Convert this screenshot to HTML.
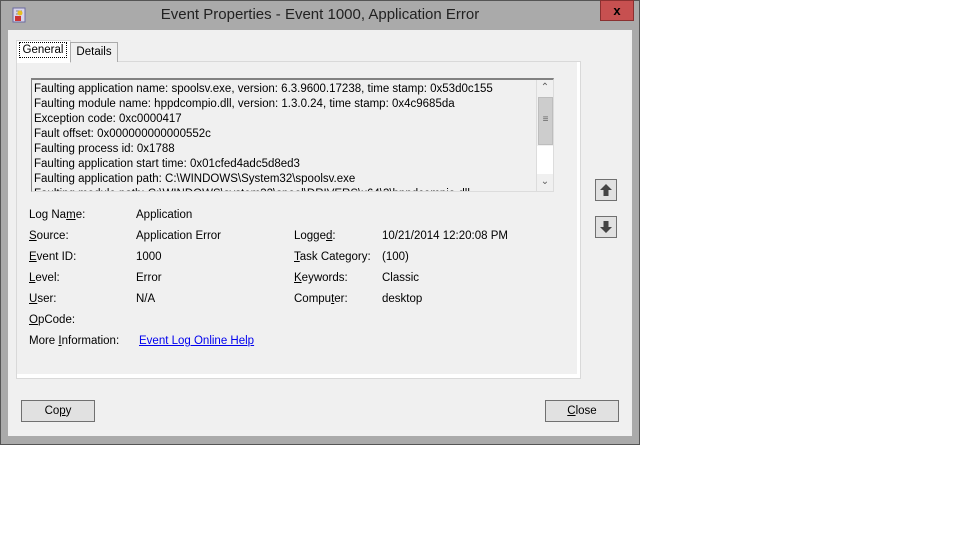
<!DOCTYPE html>
<html><head><style>
body{margin:0;width:960px;height:540px;background:#fff;position:relative;font-family:"Liberation Sans",sans-serif;font-size:11.5px;color:#000;overflow:hidden}
.a{position:absolute}
.win{left:0;top:0;width:638px;height:443px;background:#aaaaaa;border:1px solid #555}
.client{left:8px;top:30px;width:624px;height:406px;background:#f0f0f0}
.t{white-space:nowrap}
u{text-decoration:underline}
.btn{background:#e1e1e1;border:1px solid #707070;text-align:center;line-height:20px;height:20px}
.arr{width:20px;height:20px;background:#e1e1e1;border:1px solid #707070}
</style></head><body>
<div class="a win"></div>
<div class="a t" style="left:0;top:6px;width:640px;text-align:center;font-size:15px;color:#222">Event Properties - Event 1000, Application Error</div>
<svg class="a" style="left:12px;top:7px" width="14" height="16"><rect x="1" y="1" width="12" height="14" fill="#d9d4ea" stroke="#6a6aa0"/><path d="M4 4h6M4 7h6" stroke="#888"/><circle cx="8" cy="6" r="2.5" fill="#e8c020"/><rect x="3" y="9" width="6" height="5" fill="#c33"/></svg>
<div class="a" style="left:600px;top:0;width:34px;height:21px;background:#c75050;border:1px solid #8a3030;box-sizing:border-box;color:#000;font-weight:bold;text-align:center;line-height:19px;font-size:13px">x</div>
<div class="a client"></div>
<div class="a" style="left:16px;top:61px;width:563px;height:316px;border:1px solid #d9d9d9;background:#fff"></div>
<div class="a" style="left:17px;top:62px;width:560px;height:312px;background:#f0f0f0"></div>
<div class="a" style="left:16px;top:40px;width:53px;height:22px;background:#fff;border:1px solid #d9d9d9;border-bottom:none"></div>
<div class="a t" style="left:19px;top:42px;width:48px;height:16px;border:1px dotted #000;box-sizing:border-box;text-align:center;line-height:14px">General</div>
<div class="a t" style="left:70px;top:42px;width:46px;height:19px;background:#f0f0f0;border:1px solid #ababab;border-bottom:none;text-align:center;line-height:19px">Details</div>
<div class="a" style="left:31px;top:78px;width:521px;height:111px;background:#f0f0f0;border:1px solid #828282;border-top:2px solid #828282;border-right-color:#dcdcdc;border-bottom-color:#dcdcdc;overflow:hidden">
<div class="t" style="position:absolute;left:2px;top:2px;line-height:15px">Faulting application name: spoolsv.exe, version: 6.3.9600.17238, time stamp: 0x53d0c155<br>Faulting module name: hppdcompio.dll, version: 1.3.0.24, time stamp: 0x4c9685da<br>Exception code: 0xc0000417<br>Fault offset: 0x000000000000552c<br>Faulting process id: 0x1788<br>Faulting application start time: 0x01cfed4adc5d8ed3<br>Faulting application path: C:\WINDOWS\System32\spoolsv.exe<br>Faulting module path: C:\WINDOWS\system32\spool\DRIVERS\x64\3\hppdcompio.dll</div>
<div class="a" style="left:504px;top:0;width:17px;height:111px;background:#f0f0f0;border-left:1px solid #dcdcdc"></div>
<div class="a" style="left:505px;top:0;width:16px;height:16px;color:#606060;text-align:center;font-size:10px;line-height:16px">&#8963;</div>
<div class="a" style="left:506px;top:17px;width:15px;height:48px;background:#cdcdcd;border:1px solid #bdbdbd;box-sizing:border-box;text-align:center;line-height:44px;color:#666;font-size:10px">&#8801;</div>
<div class="a" style="left:505px;top:66px;width:16px;height:28px;background:#fff"></div>
<div class="a" style="left:505px;top:94px;width:16px;height:16px;color:#606060;text-align:center;font-size:10px;line-height:16px">&#8964;</div>
</div>
<div class="a t" style="left:29px;top:205px;line-height:21px">Log Na<u>m</u>e:<br><u>S</u>ource:<br><u>E</u>vent ID:<br><u>L</u>evel:<br><u>U</u>ser:<br><u>O</u>pCode:<br>More <u>I</u>nformation:</div>
<div class="a t" style="left:136px;top:205px;line-height:21px">Application<br>Application Error<br>1000<br>Error<br>N/A</div>
<div class="a t" style="left:139px;top:334px;line-height:14px;color:#0000ee;text-decoration:underline">Event Log Online Help</div>
<div class="a t" style="left:294px;top:226px;line-height:21px">Logge<u>d</u>:<br><u>T</u>ask Category:<br><u>K</u>eywords:<br>Compu<u>t</u>er:</div>
<div class="a t" style="left:382px;top:226px;line-height:21px">10/21/2014 12:20:08 PM<br>(100)<br>Classic<br>desktop</div>
<div class="a arr" style="left:595px;top:179px"><svg width="20" height="20"><path d="M10 4L4 10H7.5V16H12.5V10H16Z" fill="#444"/></svg></div>
<div class="a arr" style="left:595px;top:216px"><svg width="20" height="20"><path d="M10 16L4 10H7.5V4H12.5V10H16Z" fill="#444"/></svg></div>
<div class="a btn" style="left:21px;top:400px;width:72px">Co<u>p</u>y</div>
<div class="a btn" style="left:545px;top:400px;width:72px"><u>C</u>lose</div>
</body></html>
